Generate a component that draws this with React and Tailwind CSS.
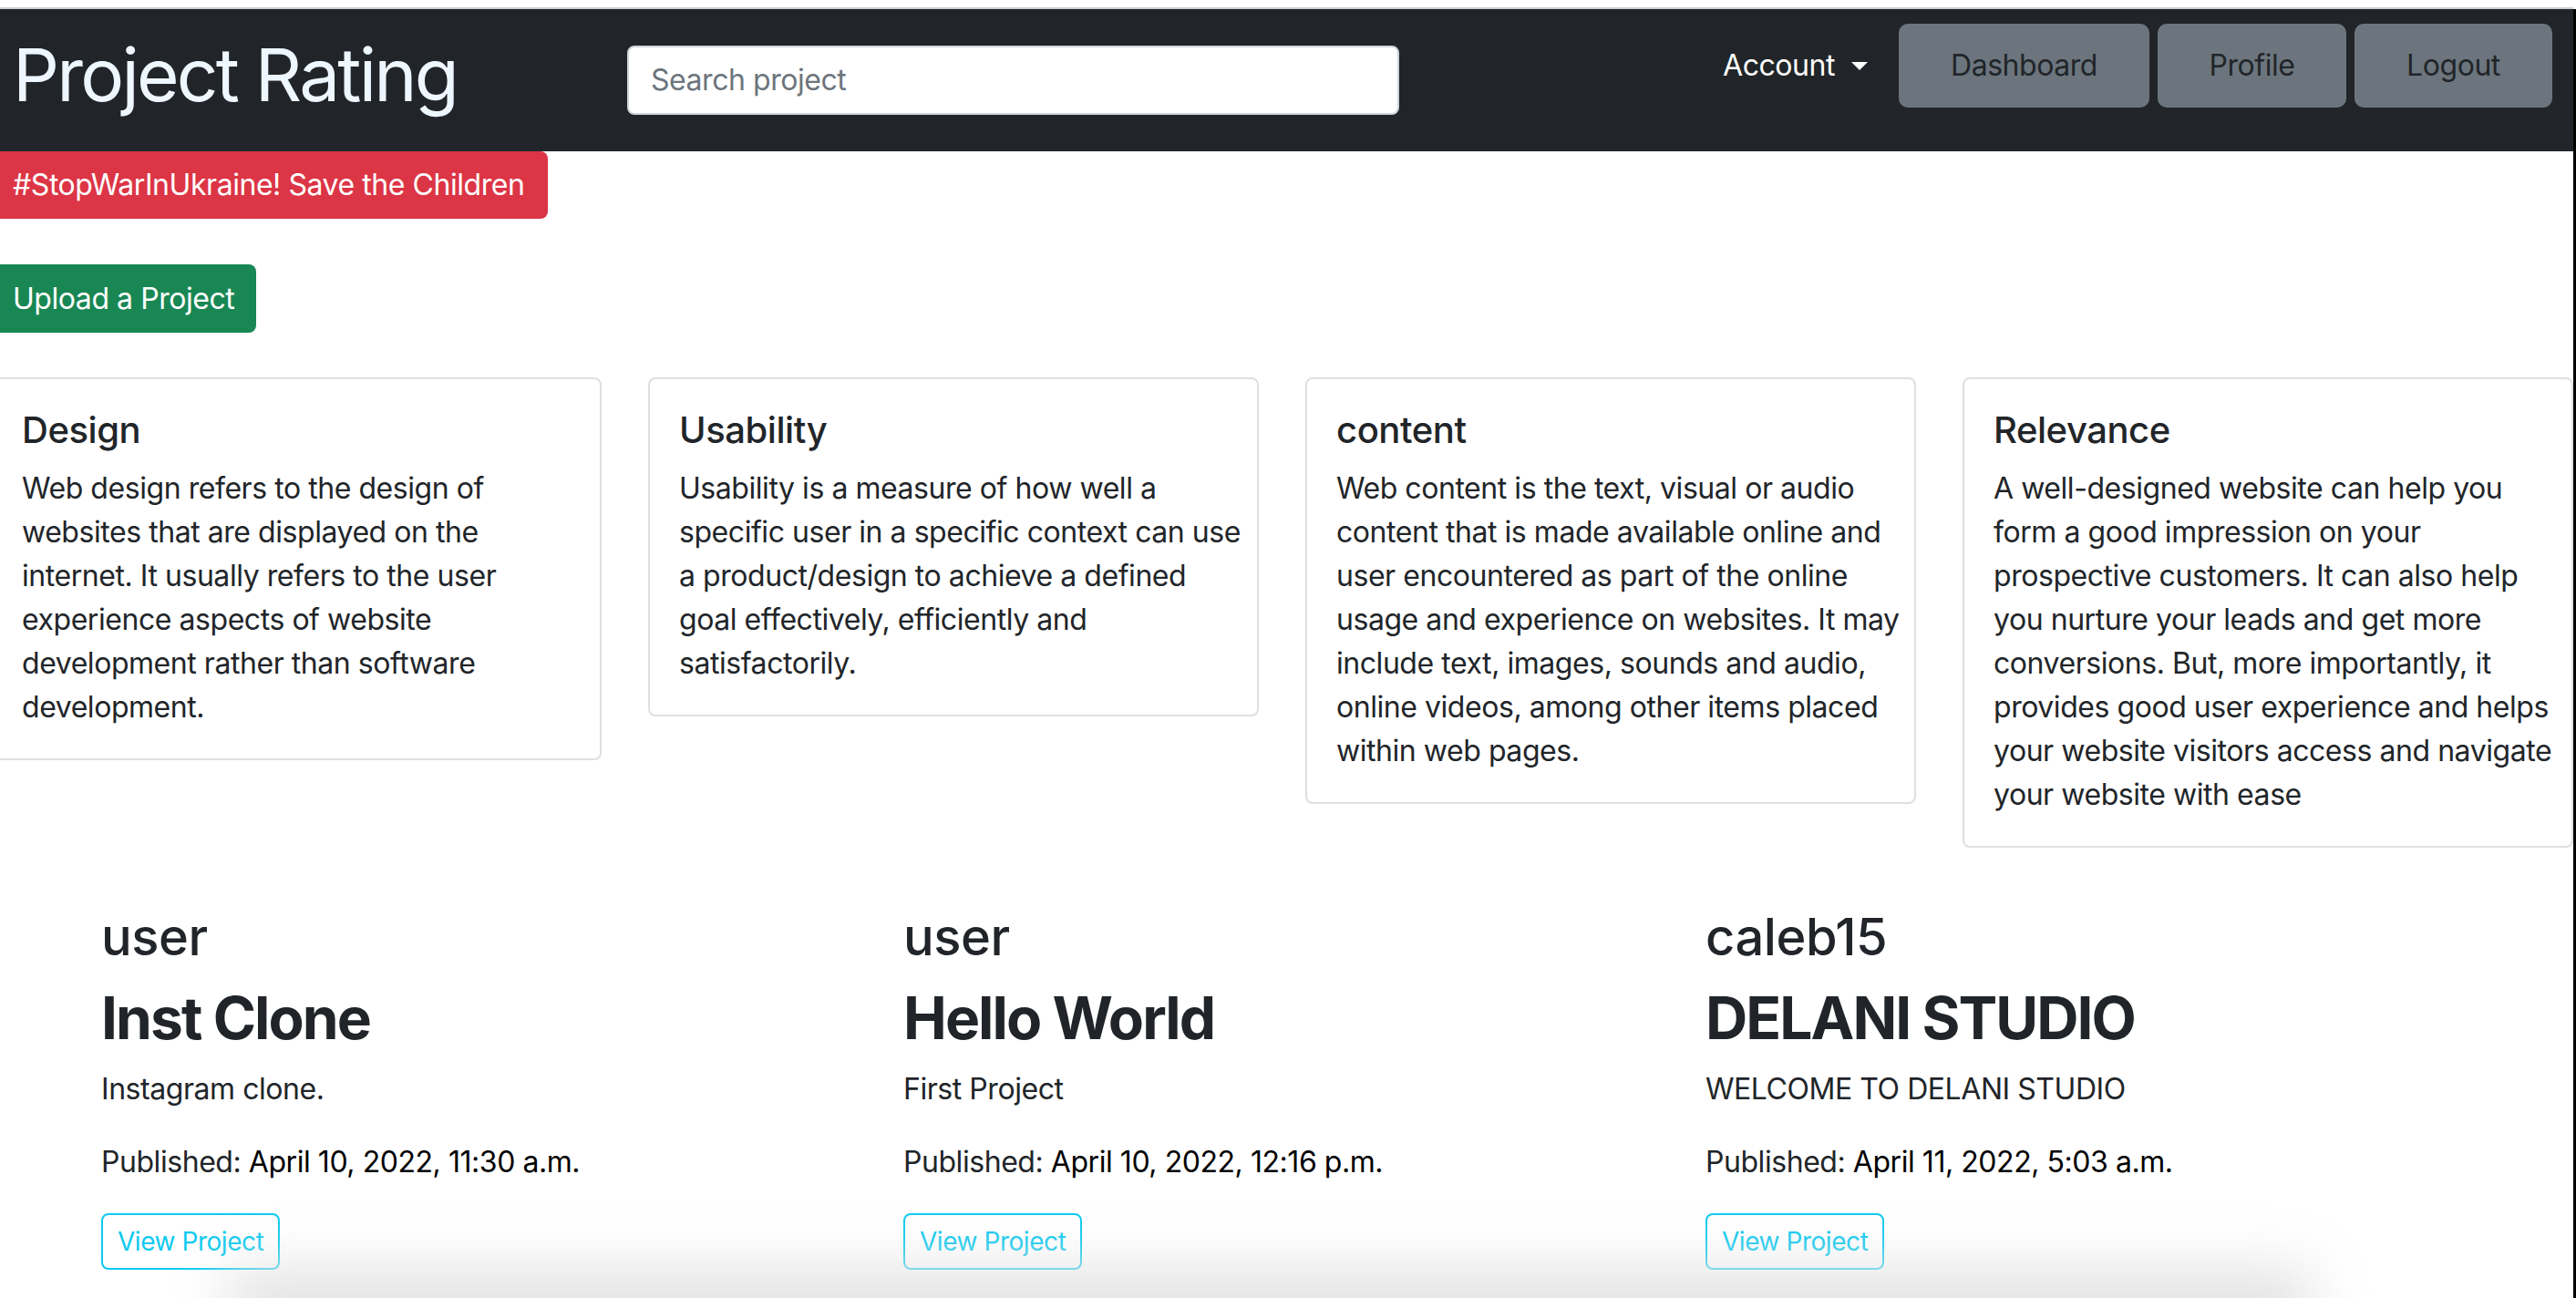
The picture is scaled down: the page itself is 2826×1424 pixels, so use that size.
import React from 'react'

const cards = [
  {
    title: 'Design',
    lines: [
      'Web design refers to the design of',
      'websites that are displayed on the',
      'internet. It usually refers to the user',
      'experience aspects of website',
      'development rather than software',
      'development.',
    ],
  },
  {
    title: 'Usability',
    lines: [
      'Usability is a measure of how well a',
      'specific user in a specific context can use',
      'a product/design to achieve a defined',
      'goal effectively, efficiently and',
      'satisfactorily.',
    ],
  },
  {
    title: 'content',
    lines: [
      'Web content is the text, visual or audio',
      'content that is made available online and',
      'user encountered as part of the online',
      'usage and experience on websites. It may',
      'include text, images, sounds and audio,',
      'online videos, among other items placed',
      'within web pages.',
    ],
  },
  {
    title: 'Relevance',
    lines: [
      'A well-designed website can help you',
      'form a good impression on your',
      'prospective customers. It can also help',
      'you nurture your leads and get more',
      'conversions. But, more importantly, it',
      'provides good user experience and helps',
      'your website visitors access and navigate',
      'your website with ease',
    ],
  },
]

const projects = [
  { user: 'user', title: 'Inst Clone', description: 'Instagram clone.', published: 'April 10, 2022, 11:30 a.m.' },
  { user: 'user', title: 'Hello World', description: 'First Project', published: 'April 10, 2022, 12:16 p.m.' },
  { user: 'caleb15', title: 'DELANI STUDIO', description: 'WELCOME TO DELANI STUDIO', published: 'April 11, 2022, 5:03 a.m.' },
]

export default function App() {
  return (
    <div className="relative flex h-[1424px] w-[2826px] overflow-hidden bg-white font-['Inter','Liberation_Sans',sans-serif] tracking-[-0.028em] text-[#212529]">
      <div className="flex w-[2823px] flex-col">
        <div className="h-[8px] bg-white" />
        <div className="h-[2px] bg-[#cfcfcf]" />

        {/* navbar */}
        <nav className="flex h-[156px] items-start bg-[#212529]">
          <div className="ml-[14px] mt-[24px] w-[674px]">
            <h1 className="text-[80px] leading-[96px] font-normal tracking-[-0.035em] text-[#eef6ff]">Project Rating</h1>
          </div>
          <div className="mt-[40px] flex h-[76px] w-[847px] items-center rounded-[8px] border-2 border-[#ced4da] bg-white px-[24px]">
            <span className="text-[32px] text-[#6c757d]">Search project</span>
          </div>
          <div className="ml-auto mt-[16px] flex h-[92px] items-center">
            <div className="mr-[34px] flex items-center gap-[18px] text-[32px] text-white">
              <span>Account</span>
              <svg width="18" height="9" viewBox="0 0 18 9">
                <path d="M0 0 L18 0 L9 9 Z" fill="white" />
              </svg>
            </div>
            <div className="flex gap-[9px]">
              <button className="h-[92px] w-[275px] rounded-[10px] bg-[#6c757d] text-[32px] text-[#212529]">Dashboard</button>
              <button className="h-[92px] w-[207px] rounded-[10px] bg-[#6c757d] text-[32px] text-[#212529]">Profile</button>
              <button className="h-[92px] w-[217px] rounded-[10px] bg-[#6c757d] text-[32px] text-[#212529]">Logout</button>
            </div>
            <div className="w-[23px]" />
          </div>
        </nav>

        <div className="flex">
          <button className="flex h-[74px] items-center rounded-r-[8px] bg-[#dc3545] pl-[14px] pr-[26px] text-[32px] text-white">
            #StopWarInUkraine! Save the Children
          </button>
        </div>

        <div className="mt-[50px] flex">
          <button className="flex h-[75px] items-center rounded-r-[8px] bg-[#198754] pl-[14px] pr-[24px] text-[32px] text-white">
            Upload a Project
          </button>
        </div>

        {/* info cards */}
        <div className="ml-[-10px] mt-[49px] grid grid-cols-[670px_670px_670px_670px] items-start gap-[51px]">
          {cards.map((card) => (
            <div key={card.title} className="rounded-[8px] border-2 border-[#dfdfdf] bg-white p-[32px]">
              <h5 className="mb-[16px] text-[40px] leading-[48px] font-medium">{card.title}</h5>
              <p className="text-[32px] leading-[48px]">
                {card.lines.map((line) => (
                  <span key={line} className="block whitespace-nowrap">{line}</span>
                ))}
              </p>
            </div>
          ))}
        </div>

        {/* projects */}
        <div className="mt-[65px] grid grid-cols-[880px_880px_880px] pl-[111px]">
          {projects.map((project) => (
            <div key={project.title}>
              <h3 className="mb-[16px] text-[56px] leading-[67px] font-medium">{project.user}</h3>
              <h2 className="mb-[16px] text-[64px] leading-[77px] font-bold tracking-[-0.03em]">{project.title}</h2>
              <p className="mb-[32px] text-[32px] leading-[48px]">{project.description}</p>
              <p className="mb-[32px] text-[32px] leading-[48px]">
                Published: <span className="text-black">{project.published}</span>
              </p>
              <button className="h-[62px] rounded-[8px] border-2 border-[#0dcaf0] px-[16px] text-[28px] text-[#0dcaf0]">
                View Project
              </button>
            </div>
          ))}
        </div>
      </div>
      <div className="mt-[10px] w-[3px] bg-black" />

      {/* window shadow at the bottom */}
      <div className="pointer-events-none absolute bottom-[-56px] left-[250px] right-[290px] h-[90px] bg-[#e4e4e4] blur-[30px]" />
    </div>
  )
}
